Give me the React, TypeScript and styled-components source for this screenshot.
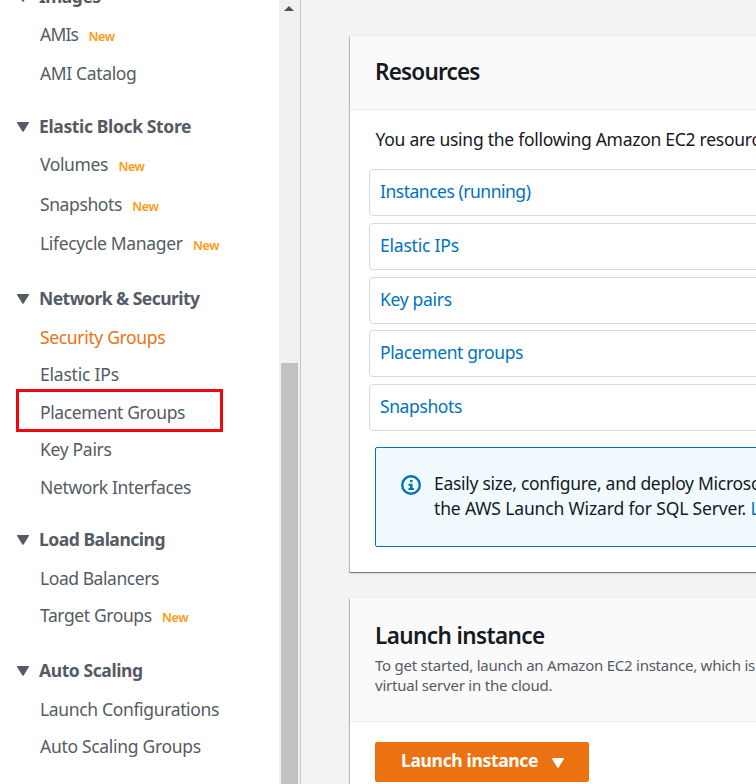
import React from 'react';
import styled, { createGlobalStyle } from 'styled-components';

const GlobalStyle = createGlobalStyle`
  *, *::after { box-sizing: border-box; }
  body {
    margin: 0;
    overflow: hidden;
    font-family: "Noto Sans", "Open Sans", sans-serif;
    font-size: 17.5px;
    line-height: 24px;
    color: #16191f;
    background: #f2f3f3;
  }
`;

const Page = styled.div`
  display: flex;
  width: 756px;
  height: 784px;
  overflow: hidden;
`;

const Sidebar = styled.aside`
  display: flex;
  flex: none;
  width: 301px;
  background: #fff;
  border-right: 1px solid #c3c8c8;
`;

const Nav = styled.nav`
  flex: 1;
  min-width: 0;
  overflow: hidden;
`;

const NavRow = styled.div<{ $height: number }>`
  display: flex;
  align-items: flex-end;
  height: ${(p) => p.$height}px;
  color: #545b64;
  white-space: nowrap;
`;

const GroupRow = styled(NavRow)`
  padding-left: 16px;
  font-weight: 700;
`;

const Caret = styled.svg<{ $gap: number; $lift: number }>`
  flex: none;
  width: 14px;
  height: 12px;
  margin-right: ${(p) => p.$gap}px;
  margin-bottom: ${(p) => p.$lift}px;
  fill: currentColor;
`;

const Label = styled.span<{ $track: number }>`
  letter-spacing: ${(p) => p.$track}px;
  white-space: nowrap;
`;

const NavLink = styled.a<{ $track: number; $active?: boolean }>`
  padding-left: 40px;
  letter-spacing: ${(p) => p.$track}px;
  color: ${(p) => (p.$active ? '#ec7211' : '#545b64')};
`;

const NewTag = styled.span`
  margin-left: 10.4px;
  font-size: 12.5px;
  font-weight: 600;
  line-height: 1;
  letter-spacing: -0.4px;
  color: #ff9914;
`;

const Highlighted = styled.span`
  position: relative;
  &::after {
    content: "";
    position: absolute;
    left: 16px;
    top: -11px;
    width: 207px;
    height: 43px;
    border: 3px solid #f0060c;
  }
`;

const Scrollbar = styled.div`
  display: flex;
  flex-direction: column;
  align-items: center;
  width: 21px;
  background: #f0f0f0;
`;

const ScrollArrow = styled.svg`
  width: 10px;
  height: 6px;
  margin: 6px 2px 351px 0;
  flex: none;
  fill: #505050;
`;

const Thumb = styled.div`
  flex: 1;
  width: 17px;
  margin-right: 1px;
  background: #c1c1c1;
`;

const Content = styled.main`
  flex: none;
  width: 500px;
  padding: 36px 0 0 49px;
`;

const Panel = styled.section`
  width: 450px;
  margin-bottom: 26px;
  background: #fff;
  box-shadow: 0 -1px 0 #eaeded, 0 1px 1px rgba(0, 28, 36, 0.4),
    -1px 1px 1px rgba(0, 28, 36, 0.2);
`;

const PanelHeader = styled.header<{ $height: number; $top: number }>`
  height: ${(p) => p.$height}px;
  padding: ${(p) => p.$top}px 0 0 25px;
  background: #fafafa;
  border-bottom: 1px solid #eaeded;
`;

const Title = styled.h2<{ $track: number }>`
  margin: 0;
  font-size: 22.5px;
  font-weight: 600;
  line-height: 30px;
  letter-spacing: ${(p) => p.$track}px;
`;

const Description = styled.p`
  margin: 4px 0 0;
  font-size: 15px;
  line-height: 20px;
  color: #545b64;
`;

const Line = styled.span<{ $track: number }>`
  display: block;
  letter-spacing: ${(p) => p.$track}px;
  white-space: nowrap;
`;

const ResourcesBody = styled.div`
  height: 462px;
  padding: 17px 0 0 19px;
`;

const Intro = styled.p`
  margin: 0 0 18px 6.5px;
  white-space: nowrap;
  letter-spacing: -0.27px;
`;

const ResourceList = styled.div`
  display: flex;
  flex-direction: column;
  gap: 6.75px;
`;

const Resource = styled.a<{ $track: number }>`
  height: 47px;
  padding: 9px 0 0 10px;
  border: 1px solid #d5dbdb;
  border-radius: 4px;
  color: #0073bb;
  letter-spacing: ${(p) => p.$track}px;
`;

const Info = styled.div`
  display: flex;
  height: 100px;
  margin: 16px 0 0 6px;
  padding: 23px 0 0 25px;
  border: 1px solid #0073bb;
  border-radius: 2px;
  background: #f1faff;
  line-height: 25px;
`;

const InfoIcon = styled.svg`
  flex: none;
  width: 20px;
  height: 20px;
  margin: 4px 13px 0 0;
`;

const InlineLink = styled.a`
  color: #0073bb;
`;

const LaunchBody = styled.div`
  padding: 20px 0 20px 25px;
`;

const LaunchButton = styled.button`
  display: flex;
  align-items: center;
  width: 214px;
  height: 40px;
  padding: 0 0 4px 26px;
  border: 0;
  border-radius: 2px;
  background: #ec7211;
  color: #fff;
  font: 700 17.5px/24px "Noto Sans", sans-serif;
  letter-spacing: -0.346px;
  white-space: nowrap;
`;

const ButtonCaret = styled(Caret)`
  margin: 5px 0 0 13px;
`;

type Item = { text: string; height: number; track: number; isNew?: boolean; active?: boolean; marked?: boolean };
type Group = { text: string; height: number; track: number; items: Item[] };

const groups: Group[] = [
  {
    text: 'Images', height: 8, track: -0.5, items: [
      { text: 'AMIs', height: 38, track: -0.8, isNew: true },
      { text: 'AMI Catalog', height: 39, track: -0.365 },
    ],
  },
  {
    text: 'Elastic Block Store', height: 53, track: -0.364, items: [
      { text: 'Volumes', height: 38, track: -0.383, isNew: true },
      { text: 'Snapshots', height: 40, track: -0.4, isNew: true },
      { text: 'Lifecycle Manager', height: 39, track: -0.343, isNew: true },
    ],
  },
  {
    text: 'Network & Security', height: 55, track: -0.543, items: [
      { text: 'Security Groups', height: 39, track: -0.34, active: true },
      { text: 'Elastic IPs', height: 37, track: -0.205 },
      { text: 'Placement Groups', height: 38, track: -0.392, marked: true },
      { text: 'Key Pairs', height: 37, track: -0.309 },
      { text: 'Network Interfaces', height: 38, track: -0.366 },
    ],
  },
  {
    text: 'Load Balancing', height: 52, track: -0.472, items: [
      { text: 'Load Balancers', height: 39, track: -0.44 },
      { text: 'Target Groups', height: 37, track: -0.4, isNew: true },
    ],
  },
  {
    text: 'Auto Scaling', height: 55, track: -0.413, items: [
      { text: 'Launch Configurations', height: 39, track: -0.344 },
      { text: 'Auto Scaling Groups', height: 37, track: -0.306 },
    ],
  },
];

const resources = [
  { text: 'Instances (running)', track: -0.48 },
  { text: 'Elastic IPs', track: -0.205 },
  { text: 'Key pairs', track: -0.306 },
  { text: 'Placement groups', track: -0.394 },
  { text: 'Snapshots', track: -0.4 },
];

const caretPath = 'M1.6 1h10.8q1.1 0 .5.9L7.8 10.3q-.8 1.1-1.6 0L1.1 1.9Q.5 1 1.6 1z';

function NavItem({ item }: { item: Item }) {
  const link = (
    <NavLink $track={item.track} $active={item.active}>{item.text}</NavLink>
  );
  return (
    <NavRow $height={item.height}>
      <div>
        {item.marked ? <Highlighted>{link}</Highlighted> : link}
        {item.isNew && <NewTag>New</NewTag>}
      </div>
    </NavRow>
  );
}

export default function App() {
  return (
    <Page>
      <GlobalStyle />
      <Sidebar>
        <Nav>
          {groups.map((group) => (
            <div key={group.text}>
              <GroupRow $height={group.height}>
                <Caret viewBox="0 0 14 12" $gap={9} $lift={5}><path d={caretPath} /></Caret>
                <Label $track={group.track}>{group.text}</Label>
              </GroupRow>
              {group.items.map((item) => <NavItem key={item.text} item={item} />)}
            </div>
          ))}
        </Nav>
        <Scrollbar>
          <ScrollArrow viewBox="0 0 10 6"><path d="M0 5h10L5 0z" /></ScrollArrow>
          <Thumb />
        </Scrollbar>
      </Sidebar>
      <Content>
        <Panel>
          <PanelHeader $height={74} $top={21}>
            <Title $track={-0.8}>Resources</Title>
          </PanelHeader>
          <ResourcesBody>
            <Intro>You are using the following Amazon EC2 resources in the US East Region:</Intro>
            <ResourceList>
              {resources.map((r) => <Resource key={r.text} $track={r.track}>{r.text}</Resource>)}
            </ResourceList>
            <Info>
              <InfoIcon viewBox="0 0 20 20">
                <circle cx="10" cy="10" r="8.8" fill="none" stroke="#0073bb" strokeWidth="2.4" />
                <path d="M9 5h2.5v2.3H9zM7.5 8.8h4v4.2H13v2H7.5v-2H9v-2.2H7.5z" fill="#0073bb" />
              </InfoIcon>
              <div>
                <Line $track={-0.29}>Easily size, configure, and deploy Microsoft SQL Server</Line>
                <Line $track={-0.157}>the AWS Launch Wizard for SQL Server. <InlineLink>Learn more</InlineLink></Line>
              </div>
            </Info>
          </ResourcesBody>
        </Panel>
        <Panel>
          <PanelHeader $height={124} $top={23}>
            <Title $track={-0.6}>Launch instance</Title>
            <Description>
              <Line $track={-0.24}>To get started, launch an Amazon EC2 instance, which is a</Line>
              <Line $track={-0.215}>virtual server in the cloud.</Line>
            </Description>
          </PanelHeader>
          <LaunchBody>
            <LaunchButton>
              Launch instance
              <ButtonCaret viewBox="0 0 14 12" $gap={0} $lift={0}><path d={caretPath} /></ButtonCaret>
            </LaunchButton>
          </LaunchBody>
        </Panel>
      </Content>
    </Page>
  );
}
